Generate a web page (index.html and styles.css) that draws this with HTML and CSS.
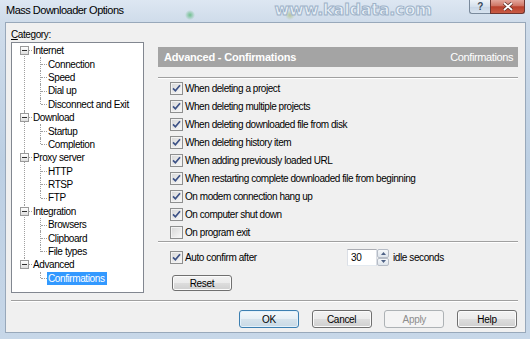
FILE: index.html
```html
<!DOCTYPE html>
<html lang="en">
<head>
    <meta charset="UTF-8">
    <title>Mass Downloader Options</title>
    <link rel="stylesheet" href="styles.css">
</head>
<body>
    <div class="window">
        <div class="titlebar">
            <span class="title">Mass Downloader Options</span>
            <span class="watermark">www.kaldata.com</span>
            <div class="caption-buttons">
                <span class="cap-btn help-btn">?</span>
                <span class="cap-btn close-btn">
                    <svg width="12" height="9" viewBox="0 0 12 9"><path d="M2 1 L10 8 M10 1 L2 8" stroke="#5a2a24" stroke-width="3.2" fill="none"/><path d="M2 1 L10 8 M10 1 L2 8" stroke="#fff" stroke-width="1.8" fill="none"/></svg>
                </span>
            </div>
        </div>

        <div class="client">
            <div class="main">
                <div class="left-col">
                    <div class="cat-label"><u>C</u>ategory:</div>
                    <div class="tree-box">
                        <ul class="tree">
                            <li class="node">
                                <div class="row"><span class="exp"></span><span class="dash"></span><span class="label">Internet</span></div>
                                <ul class="children">
                                    <li><span class="label">Connection</span></li>
                                    <li><span class="label">Speed</span></li>
                                    <li><span class="label">Dial up</span></li>
                                    <li><span class="label">Disconnect and Exit</span></li>
                                </ul>
                            </li>
                            <li class="node">
                                <div class="row"><span class="exp"></span><span class="dash"></span><span class="label">Download</span></div>
                                <ul class="children">
                                    <li><span class="label">Startup</span></li>
                                    <li><span class="label">Completion</span></li>
                                </ul>
                            </li>
                            <li class="node">
                                <div class="row"><span class="exp"></span><span class="dash"></span><span class="label">Proxy server</span></div>
                                <ul class="children">
                                    <li><span class="label">HTTP</span></li>
                                    <li><span class="label">RTSP</span></li>
                                    <li><span class="label">FTP</span></li>
                                </ul>
                            </li>
                            <li class="node">
                                <div class="row"><span class="exp"></span><span class="dash"></span><span class="label">Integration</span></div>
                                <ul class="children">
                                    <li><span class="label">Browsers</span></li>
                                    <li><span class="label">Clipboard</span></li>
                                    <li><span class="label">File types</span></li>
                                </ul>
                            </li>
                            <li class="node">
                                <div class="row"><span class="exp"></span><span class="dash"></span><span class="label">Advanced</span></div>
                                <ul class="children">
                                    <li><span class="label selected">Confirmations</span></li>
                                </ul>
                            </li>
                        </ul>
                    </div>
                </div>

                <div class="right-col">
                    <div class="page-header">
                        <span class="page-title">Advanced - Confirmations</span>
                        <span class="page-sub">Confirmations</span>
                    </div>
                    <div class="etched"></div>

                    <div class="check-list">
                        <div class="check-row"><span class="cb"><svg width="9" height="9" viewBox="0 0 9 9"><path d="M1 4.3 L3.4 6.8 L8 1.2" fill="none" stroke="#3d5286" stroke-width="1.7"/></svg></span>When deleting a project</div>
                        <div class="check-row"><span class="cb"><svg width="9" height="9" viewBox="0 0 9 9"><path d="M1 4.3 L3.4 6.8 L8 1.2" fill="none" stroke="#3d5286" stroke-width="1.7"/></svg></span>When deleting multiple projects</div>
                        <div class="check-row"><span class="cb"><svg width="9" height="9" viewBox="0 0 9 9"><path d="M1 4.3 L3.4 6.8 L8 1.2" fill="none" stroke="#3d5286" stroke-width="1.7"/></svg></span>When deleting downloaded file from disk</div>
                        <div class="check-row"><span class="cb"><svg width="9" height="9" viewBox="0 0 9 9"><path d="M1 4.3 L3.4 6.8 L8 1.2" fill="none" stroke="#3d5286" stroke-width="1.7"/></svg></span>When deleting history item</div>
                        <div class="check-row"><span class="cb"><svg width="9" height="9" viewBox="0 0 9 9"><path d="M1 4.3 L3.4 6.8 L8 1.2" fill="none" stroke="#3d5286" stroke-width="1.7"/></svg></span>When adding previously loaded URL</div>
                        <div class="check-row"><span class="cb"><svg width="9" height="9" viewBox="0 0 9 9"><path d="M1 4.3 L3.4 6.8 L8 1.2" fill="none" stroke="#3d5286" stroke-width="1.7"/></svg></span>When restarting complete downloaded file from beginning</div>
                        <div class="check-row"><span class="cb"><svg width="9" height="9" viewBox="0 0 9 9"><path d="M1 4.3 L3.4 6.8 L8 1.2" fill="none" stroke="#3d5286" stroke-width="1.7"/></svg></span>On modem connection hang up</div>
                        <div class="check-row"><span class="cb"><svg width="9" height="9" viewBox="0 0 9 9"><path d="M1 4.3 L3.4 6.8 L8 1.2" fill="none" stroke="#3d5286" stroke-width="1.7"/></svg></span>On computer shut down</div>
                        <div class="check-row"><span class="cb"></span>On program exit</div>
                    </div>
                    <div class="etched etched-tight"></div>

                    <div class="auto-row">
                        <div class="auto-check"><span class="cb"><svg width="9" height="9" viewBox="0 0 9 9"><path d="M1 4.3 L3.4 6.8 L8 1.2" fill="none" stroke="#3d5286" stroke-width="1.7"/></svg></span>Auto confirm after</div>
                        <div class="spin">
                            <span class="spin-input">30</span>
                            <span class="spin-btns">
                                <span class="spin-btn"><svg width="5" height="3" viewBox="0 0 5 3"><path d="M0 3 L2.5 0 L5 3 Z" fill="#4d6185"/></svg></span>
                                <span class="spin-btn"><svg width="5" height="3" viewBox="0 0 5 3"><path d="M0 0 L2.5 3 L5 0 Z" fill="#4d6185"/></svg></span>
                            </span>
                        </div>
                        <span class="idle">idle seconds</span>
                    </div>

                    <button class="btn reset-btn">Reset</button>
                </div>
            </div>

            <div class="etched bottom-sep"></div>

            <div class="button-row">
                <button class="btn btn-default">OK</button>
                <button class="btn">Cancel</button>
                <button class="btn btn-disabled">Apply</button>
                <button class="btn">Help</button>
            </div>
        </div>
    </div>
</body>
</html>
```

FILE: styles.css
```css
body {
    margin: 0;
    width: 530px;
    height: 339px;
    overflow: hidden;
    font-family: "Liberation Sans", Arial, sans-serif;
    font-size: 10px;
    letter-spacing: -0.4px;
    color: #000;
}
.window {
    width: 530px;
    height: 339px;
    box-sizing: border-box;
    background:
        radial-gradient(circle at 190px 15px, rgba(46, 170, 80, 0.6) 0, rgba(46, 170, 80, 0) 5px),
        radial-gradient(circle at 290px 15px, rgba(150, 170, 60, 0.45) 0, rgba(150, 170, 60, 0) 5px),
        linear-gradient(to bottom, #dde7f2 0, #cfdcea 22px, #bccfe3 160px, #c7d7e8 339px);
}
.titlebar {
    height: 22px;
    display: flex;
    align-items: flex-start;
    padding-left: 6px;
}
.title {
    font-size: 11px;
    letter-spacing: -0.5px;
    line-height: 21px;
    color: #000;
}
.watermark {
    margin-left: 151px;
    font-family: "DejaVu Sans", sans-serif;
    font-weight: bold;
    font-size: 16px;
    line-height: 19px;
    letter-spacing: -0.2px;
    color: rgba(240, 246, 252, 0.8);
    -webkit-text-stroke: 1px #9db2c8;
}
.caption-buttons {
    margin-left: auto;
    margin-right: 5px;
    display: flex;
}
.cap-btn {
    height: 14px;
    box-sizing: border-box;
    display: flex;
    align-items: center;
    justify-content: center;
}
.help-btn {
    width: 21px;
    border: 1px solid #7a8a9c;
    border-right: none;
    border-top: none;
    border-radius: 0 0 0 3px;
    background: linear-gradient(#eef3f8, #d5e0ec 50%, #c6d4e4 51%, #d8e3ef);
    color: #3a4a5c;
    font-weight: bold;
    font-size: 10px;
}
.close-btn {
    width: 35px;
    border: 1px solid #6e3530;
    border-top: none;
    border-radius: 0 0 3px 0;
    background: linear-gradient(#e3a79c, #cf7565 45%, #b9402c 52%, #c95c45);
}

.client {
    margin-left: 5px;
    width: 521px;
    height: 311px;
    box-sizing: border-box;
    border: 1px solid #98a8ba;
    background-color: #f0f0f0;
    padding: 5px 7px 0 5px;
}
.main {
    display: flex;
    gap: 14px;
    height: 265px;
}
.left-col {
    width: 133px;
}
.cat-label {
    line-height: 13px;
    margin-bottom: 1px;
}
.tree-box {
    height: 251px;
    box-sizing: border-box;
    border: 1px solid #828790;
    background-color: #fff;
    padding: 1px 0 0 8px;
}
.tree, .children {
    list-style: none;
    margin: 0;
    padding: 0;
}
.node {
    position: relative;
}
.node::before {
    content: "";
    position: absolute;
    left: 4px;
    top: 0;
    bottom: 0;
    border-left: 1px dotted #a0a0a0;
}
.node:first-child::before {
    top: 6.7px;
}
.node:last-child::before {
    bottom: auto;
    height: 6.7px;
}
.row {
    display: flex;
    align-items: center;
    height: 13.4px;
}
.exp {
    position: relative;
    z-index: 1;
    width: 9px;
    height: 9px;
    box-sizing: border-box;
    border: 1px solid #9a9a9a;
    background: linear-gradient(#ffffff, #dedede);
}
.exp::after {
    content: "";
    position: absolute;
    left: 1px;
    top: 3px;
    width: 5px;
    height: 1px;
    background-color: #2f2f2f;
}
.dash {
    width: 3px;
    border-top: 1px dotted #a0a0a0;
    margin-right: 1px;
}
.label {
    display: inline-block;
    line-height: 13px;
    white-space: nowrap;
}
.children {
    padding-left: 20px;
}
.children li {
    position: relative;
    height: 13.4px;
    display: flex;
    align-items: center;
    padding-left: 8px;
}
.children li::before {
    content: "";
    position: absolute;
    left: 0;
    top: 0;
    bottom: 0;
    border-left: 1px dotted #a0a0a0;
}
.children li:last-child::before {
    bottom: auto;
    height: 6.7px;
}
.children li::after {
    content: "";
    position: absolute;
    left: 1px;
    top: 6.5px;
    width: 6px;
    border-top: 1px dotted #a0a0a0;
}
.selected {
    background-color: #3399ff;
    color: #fff;
    padding: 0 2px 0 1px;
    margin-left: -1px;
}

.right-col {
    flex: 1;
    display: flex;
    flex-direction: column;
    align-items: stretch;
}
.page-header {
    margin-top: 19px;
    height: 20px;
    display: flex;
    align-items: center;
    justify-content: space-between;
    padding: 0 5px 0 6px;
    background-color: #a4a4a4;
    color: #fff;
}
.page-title {
    font-weight: bold;
    font-size: 11px;
    letter-spacing: -0.2px;
}
.page-sub {
    font-size: 11px;
    letter-spacing: -0.4px;
}
.etched {
    margin-top: 10px;
    border-top: 1px solid #a0a0a0;
    border-bottom: 1px solid #fff;
}
.etched-tight {
    margin-top: 0;
}
.check-row {
    display: flex;
    align-items: center;
    gap: 2px;
    height: 18px;
    padding-left: 12px;
    white-space: nowrap;
    letter-spacing: -0.45px;
}
.cb {
    width: 13px;
    height: 13px;
    box-sizing: border-box;
    border: 1px solid #8e8f8f;
    background: linear-gradient(135deg, #d6d6d6, #f9f9f9);
    box-shadow: inset 0 0 0 1px #f2f2f2;
    display: flex;
    align-items: center;
    justify-content: center;
    flex-shrink: 0;
}
.auto-row {
    margin-top: 6px;
    height: 17px;
    display: flex;
    align-items: center;
}
.auto-check {
    width: 189px;
    box-sizing: border-box;
    padding-left: 12px;
    display: flex;
    align-items: center;
    gap: 2px;
}
.spin {
    display: flex;
    height: 17px;
}
.spin-input {
    width: 30px;
    box-sizing: border-box;
    border: 1px solid #dbdfe6;
    border-top-color: #abadb3;
    border-bottom-color: #e3e9ef;
    background-color: #fff;
    padding-left: 3px;
    line-height: 15px;
}
.spin-btns {
    width: 12px;
    display: flex;
    flex-direction: column;
}
.spin-btn {
    flex: 1;
    box-sizing: border-box;
    border: 1px solid #b6bcc6;
    border-radius: 2px;
    background: linear-gradient(#f6f8fa, #dfe5ec);
    display: flex;
    align-items: center;
    justify-content: center;
}
.idle {
    margin-left: 4px;
}

.btn {
    width: 60px;
    height: 18px;
    padding: 0;
    box-sizing: border-box;
    border: 1px solid #707070;
    border-radius: 3px;
    background: linear-gradient(#f2f2f2 0%, #ebebeb 50%, #dddddd 51%, #cfcfcf 100%);
    box-shadow: inset 0 0 0 1px #fbfbfb;
    font-family: "Liberation Sans", Arial, sans-serif;
    font-size: 10px;
    letter-spacing: -0.3px;
    color: #000;
}
.reset-btn {
    align-self: flex-start;
    margin: 9px 0 0 14px;
    height: 16px;
}
.btn-default {
    border-color: #3c7fb1;
    background: linear-gradient(#f3f8fb 0%, #e6eff5 50%, #d6e3ec 51%, #c8d9e5 100%);
    box-shadow: inset 0 0 0 1px #e3f1fb;
}
.btn-disabled {
    border-color: #adb2b5;
    background: #f4f4f4;
    box-shadow: none;
    color: #8d8d8d;
}
.bottom-sep {
    margin-top: 7px;
}
.button-row {
    display: flex;
    justify-content: flex-end;
    gap: 12.7px;
    margin-top: 8px;
    margin-right: 1px;
}
```
